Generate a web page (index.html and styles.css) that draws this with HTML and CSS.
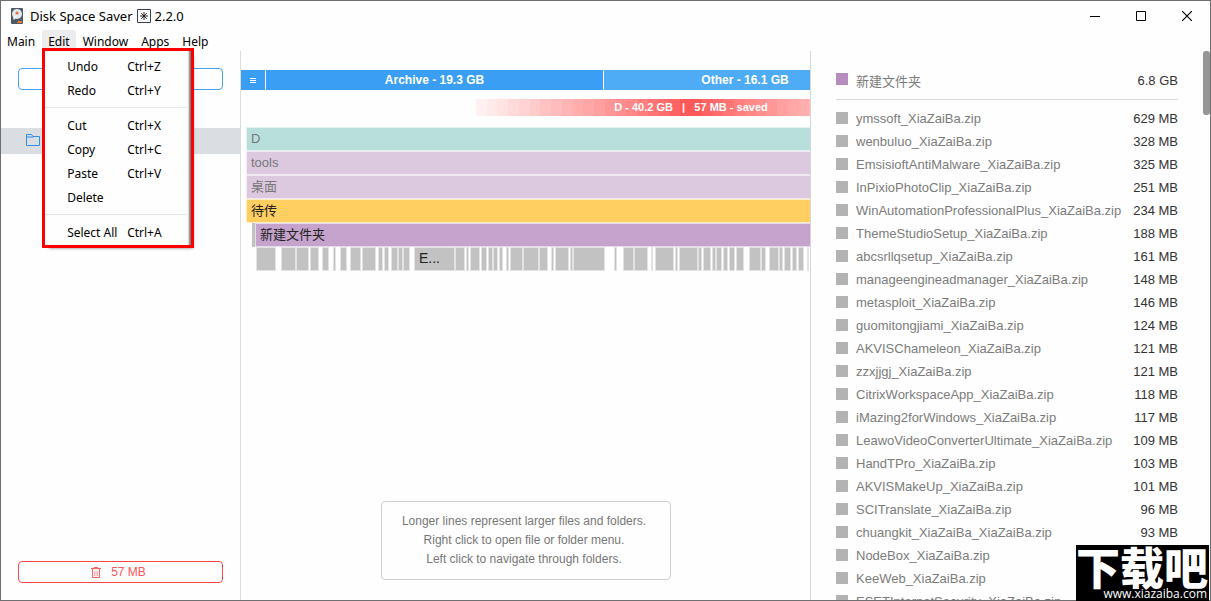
FILE: index.html
```html
<!DOCTYPE html>
<html lang="en">
<head>
<meta charset="utf-8">
<title>Disk Space Saver</title>
<link rel="stylesheet" href="styles.css">
</head>
<body>
<div class="window">
  <header class="titlebar">
    <svg class="app-icon" width="12" height="16" viewBox="0 0 12 16"><rect width="12" height="16" rx="1" fill="#4d5a66"/><circle cx="6" cy="6" r="5" fill="#e4e8ea"/><circle cx="6" cy="5" r="1.6" fill="#d9763c"/><path d="M2 10l3-3 1 1-3 4z" fill="#f8f8f8"/><path d="M7 13h4v2H6z" fill="#ef7b2d"/></svg>
    <h1 class="title">Disk Space Saver <svg class="star" width="14" height="14" viewBox="0 0 14 14"><path d="M.5.5h13v13H.5z" fill="#fff" stroke="#3b3f58"/><path d="M7 3v8M3 7h8M4.2 4.2l5.6 5.6M9.800 4.200l-5.600 5.600" stroke="#222"/></svg> 2.2.0</h1>
    <div class="controls">
      <button aria-label="Minimize"><svg width="10" height="10"><path d="M0 5.500h10" stroke="#000"/></svg></button>
      <button aria-label="Maximize"><svg width="10" height="10"><path d="M.5.5h9v9h-9z" fill="none" stroke="#000"/></svg></button>
      <button aria-label="Close"><svg width="10" height="10"><path d="M0 0l10 10M10 0L0 10" stroke="#000" stroke-width="1.200"/></svg></button>
    </div>
  </header>
  <nav class="menubar">
    <button>Main</button>
    <div class="menu-host">
      <button class="open">Edit</button>
      <div class="menu">
        <button><span>Undo</span><span>Ctrl+Z</span></button>
        <button><span>Redo</span><span>Ctrl+Y</span></button>
        <hr>
        <button><span>Cut</span><span>Ctrl+X</span></button>
        <button><span>Copy</span><span>Ctrl+C</span></button>
        <button><span>Paste</span><span>Ctrl+V</span></button>
        <button><span>Delete</span></button>
        <hr>
        <button><span>Select All</span><span>Ctrl+A</span></button>
      </div>
    </div>
    <button>Window</button>
    <button>Apps</button>
    <button>Help</button>
  </nav>
  <main class="panes">
    <aside class="sidebar">
      <button class="outline scan" aria-label="Scan"></button>
      <div class="folder-row"><svg width="14" height="12" viewBox="0 0 14 12"><path d="M.5 11.500V.5h5l1.500 2h6.500v9zM.5 3h7" fill="none" stroke="#2f8eea"/></svg></div>
      <button class="outline trash"><svg width="10" height="11" viewBox="0 0 10 11" fill="none" stroke="#ff5c5c"><path d="M0 1.500h10M3 .5h4M1.500 2v8.500h7V2"/><path d="M3.500 4v5M5 4v5M6.500 4v5" stroke="#ffb0b0"/></svg>57 MB</button>
    </aside>
    <section class="map">
      <div class="types">
        <button class="type-menu" aria-label="Types"><svg width="6" height="5"><path d="M0 .5h6M0 2.500h6M0 4.500h6" stroke="#fff"/></svg></button>
        <div class="archive">Archive - 19.3 GB</div>
        <div class="other">Other - 16.1 GB</div>
      </div>
      <div class="saved">D - 40.2 GB&nbsp;&nbsp; | &nbsp;&nbsp;57 MB - saved</div>
      <div class="levels">
        <div class="level teal">D</div>
        <div class="level mauve">tools</div>
        <div class="level mauve">桌面</div>
        <div class="level amber">待传</div>
        <div class="nested"><div class="sliver"></div><div class="level purple">新建文件夹</div></div>
      </div>
      <svg class="files" width="554" height="24" fill="#c2c2c2" stroke="#e3e3e3">
        <path d="M.5.5h19v23h-19zM25.500.5h14v23h-14zM40.500.5h12v23h-12zM54.500.5h8v23h-8zM66.500.5h6v23h-6zM77.500.5h2v23h-2zM84.500.5h6v23h-6zM94.500.5h10v23h-10zM106.500.5h13v23h-13zM122.500.5h4v23h-4zM128.500.5h4v23h-4zM135.500.5h6v23h-6zM142.500.5h4v23h-4zM147.500.5h6v23h-6zM158.500.5h40v23h-40zM199.500.5h9v23h-9zM210.500.5h2v23h-2zM214.500.5h9v23h-9zM225.500.5h5v23h-5zM232.500.5h4v23h-4zM237.500.5h4v23h-4zM243.500.5h3v23h-3zM250.500.5h2v23h-2zM254.500.5h12v23h-12zM267.500.5h15v23h-15zM283.500.5h8v23h-8zM295.500.5h2v23h-2zM299.500.5h13v23h-13zM314.500.5h2v23h-2zM317.500.5h31v23h-31z"/>
        <path d="M358.500.5h2v23h-2zM367.500.5h10v23h-10zM378.500.5h13v23h-13zM395.500.5h1v23h-1zM399.500.5h18v23h-18zM419.500.5h2v23h-2zM423.500.5h18v23h-18zM442.500.5h3v23h-3zM447.500.5h7v23h-7zM456.500.5h3v23h-3zM460.500.5h5v23h-5zM467.500.5h4v23h-4zM473.500.5h5v23h-5zM480.500.5h7v23h-7zM493.500.5h11v23h-11zM505.500.5h4v23h-4zM513.500.5h9v23h-9zM523.500.5h3v23h-3zM528.500.5h6v23h-6zM536.500.5h4v23h-4zM542.500.5h5v23h-5zM551.500.5h1v23h-1z"/>
        <text x="163" y="16">E...</text>
      </svg>
      <div class="hint">Longer lines represent larger files and folders.<br>Right click to open file or folder menu.<br>Left click to navigate through folders.</div>
    </section>
    <section class="details">
      <div class="row head"><i></i><span>新建文件夹</span><b>6.8 GB</b></div>
      <div class="row"><i></i><span>ymssoft_XiaZaiBa.zip</span><b>629 MB</b></div>
      <div class="row"><i></i><span>wenbuluo_XiaZaiBa.zip</span><b>328 MB</b></div>
      <div class="row"><i></i><span>EmsisioftAntiMalware_XiaZaiBa.zip</span><b>325 MB</b></div>
      <div class="row"><i></i><span>InPixioPhotoClip_XiaZaiBa.zip</span><b>251 MB</b></div>
      <div class="row"><i></i><span>WinAutomationProfessionalPlus_XiaZaiBa.zip</span><b>234 MB</b></div>
      <div class="row"><i></i><span>ThemeStudioSetup_XiaZaiBa.zip</span><b>188 MB</b></div>
      <div class="row"><i></i><span>abcsrllqsetup_XiaZaiBa.zip</span><b>161 MB</b></div>
      <div class="row"><i></i><span>manageengineadmanager_XiaZaiBa.zip</span><b>148 MB</b></div>
      <div class="row"><i></i><span>metasploit_XiaZaiBa.zip</span><b>146 MB</b></div>
      <div class="row"><i></i><span>guomitongjiami_XiaZaiBa.zip</span><b>124 MB</b></div>
      <div class="row"><i></i><span>AKVISChameleon_XiaZaiBa.zip</span><b>121 MB</b></div>
      <div class="row"><i></i><span>zzxjjgj_XiaZaiBa.zip</span><b>121 MB</b></div>
      <div class="row"><i></i><span>CitrixWorkspaceApp_XiaZaiBa.zip</span><b>118 MB</b></div>
      <div class="row"><i></i><span>iMazing2forWindows_XiaZaiBa.zip</span><b>117 MB</b></div>
      <div class="row"><i></i><span>LeawoVideoConverterUltimate_XiaZaiBa.zip</span><b>109 MB</b></div>
      <div class="row"><i></i><span>HandTPro_XiaZaiBa.zip</span><b>103 MB</b></div>
      <div class="row"><i></i><span>AKVISMakeUp_XiaZaiBa.zip</span><b>101 MB</b></div>
      <div class="row"><i></i><span>SCITranslate_XiaZaiBa.zip</span><b>96 MB</b></div>
      <div class="row"><i></i><span>chuangkit_XiaZaiBa_XiaZaiBa.zip</span><b>93 MB</b></div>
      <div class="row"><i></i><span>NodeBox_XiaZaiBa.zip</span></div>
      <div class="row"><i></i><span>KeeWeb_XiaZaiBa.zip</span></div>
      <div class="row"><i></i><span>ESETInternetSecurity_XiaZaiBa.zip</span></div>
      <div class="thumb"></div>
    </section>
  </main>
</div>
<div class="watermark"><strong>下载吧</strong><span>www.xiazaiba.com</span></div>
</body>
</html>
```
FILE: styles.css
```css
* { box-sizing: border-box; }
body { margin: 0; font-family: "Liberation Sans", "Noto Sans CJK SC", sans-serif; color: #333; }
button { margin: 0; padding: 0; border: 0; background: none; font: inherit; color: inherit; }
svg { display: block; }
.window { height: 100vh; display: flex; flex-direction: column; overflow: hidden; border: 1px solid #6f6f71; background: #fefefe; }
.titlebar, .menubar { font-family: "Noto Sans", sans-serif; color: #000; flex: none; display: flex; }
.titlebar { height: 29px; align-items: center; padding-left: 10px; }
.title { display: flex; align-items: center; gap: 4px; margin: 0 auto 0 7px; font-size: 13px; font-weight: 400; }
.controls { display: flex; }
.controls button { width: 46px; height: 28px; display: grid; place-items: center; }
.menubar { height: 21px; gap: 1px; font-size: 12px; }
.menubar > button, .menu-host > button { height: 21px; padding: 0 6px; line-height: 23px; }
.menu-host { position: relative; }
.menu-host > .open { background: #ececec; border-radius: 3px 3px 0 0; }
.menu { position: absolute; z-index: 2; top: 18px; left: 0; width: 152px; padding-top: 3px; padding-bottom: 1px; border: 3px solid #f00; background: #fefefe; box-shadow: inset -3px 0 2px -1px #777, 3px 4px 3px -4px #777; }
.menu button { width: 100%; height: 24px; padding-left: 22px; display: grid; grid-template-columns: 60px 1fr; align-items: center; text-align: left; white-space: nowrap; }
.menu hr { height: 1px; margin: 5px 4px 5px 0; border: 0; background: #e6e6e6; }
.panes { flex: 1; min-height: 0; display: flex; }
.sidebar { width: 240px; flex: none; display: flex; flex-direction: column; padding: 17px 0; border-right: 1px solid #dcdcdc; }
.outline { height: 22px; margin: 0 17px; border: 1px solid #45a2f2; border-radius: 4px; }
.folder-row { height: 26px; margin-top: 38px; padding: 6px 25px; background: #dadde1; }
.trash { margin-top: auto; padding-right: 4px; border-color: #ff4646; color: #f55; font-size: 12px; display: flex; justify-content: center; align-items: center; gap: 10px; }
.map { flex: 1; min-width: 0; overflow: hidden; display: flex; flex-direction: column; padding: 19px 0 20px; border-right: 1px solid #d6d6d6; }
.types { display: flex; flex: none; gap: 1px; height: 20px; line-height: 20px; font-size: 12px; font-weight: 700; color: #fff; text-align: center; }
.type-menu { width: 24px; flex: none; display: grid; place-items: center; background: #3a9ff4; }
.archive { width: 337px; flex: none; background: #3a9ff4; }
.other { width: 282px; flex: none; background: #4eabf6; }
.saved {
  --steps: #fff1f1 0 5%, #ffeaea 0 10%, #ffe2e2 0 15%, #ffdada 0 20%, #ffd3d3 0 25%, #ffcbcb 0 30%, #ffc3c3 0 35%, #ffbcbc 0 40%, #ffb5b5 0 45%, #ffadad 0 50%, #ffa6a6 0 55%, #ff9f9f 0 60%, #ff9797 0 65%, #ff8f8f 0 70%, #ff8787 0 75%, #ff7e7e 0 80%, #ff7575 0 85%, #ff6c6c 0 90%, #ff6363 0 95%, #ff5858 0 100%;
  flex: none; width: 430px; height: 17px; margin: 9px 0 11px 235px; line-height: 17px; font-size: 11px; font-weight: 700; color: #fff; text-align: center; white-space: nowrap;
  background: linear-gradient(to right, var(--steps)) left / 50% 100% no-repeat, linear-gradient(to left, var(--steps)) right / 50% 100% no-repeat;
}
.levels { flex: none; padding-left: 5px; font-size: 13px; }
.level { height: 24px; padding-left: 5px; line-height: 24px; box-shadow: inset 1px 1px #ffffff99, inset 0 -1px #ffffff99; }
.teal { background: #b9dfdd; color: #777; }
.mauve { background: #dcc8df; color: #777; }
.amber { background: #ffcf62; color: #222; }
.nested { display: flex; padding-left: 6px; }
.nested .level { flex: 1; }
.sliver { width: 3px; background: #c2c2c2; }
.purple { background: #c5a3cc; color: #222; }
.files { flex: none; margin-left: 15px; }
.files text { font-size: 14px; fill: #222; stroke: none; }
.hint { width: 290px; margin: auto auto 0 140px; padding: 10px 4px 10px 0; border: 1px solid #cfcfcf; border-radius: 4px; font-size: 12px; line-height: 19px; text-align: center; color: #777; }
.details { position: relative; width: 399px; flex: none; padding: 11px 32px 0 25px; overflow: hidden; font-size: 13px; }
.row { display: flex; height: 23px; align-items: center; gap: 8px; color: #7c7c7c; white-space: nowrap; }
.row i { width: 12px; height: 12px; flex: none; margin-bottom: 2px; background: #b3b3b3; }
.row b { margin-left: auto; font-weight: 400; color: #333; }
.head { height: 38px; margin-bottom: 7px; padding-bottom: 1px; border-bottom: 1px solid #d9d9d9; }
.head i { background: #b68dbf; }
.thumb { position: absolute; top: 0; right: 0; width: 7px; height: 64px; border-radius: 3px; background: #969696; }
.watermark { position: fixed; right: 2px; bottom: 0; z-index: 3; width: 133px; height: 56px; overflow: hidden; display: flex; flex-direction: column; background: #000; color: #fff; font-family: "Open Sans", "Noto Sans CJK SC", sans-serif; }
.watermark strong { font: 900 44px/42px "Noto Sans CJK SC", sans-serif; }
.watermark span { padding-right: 2px; font-size: 12px; line-height: 14px; text-align: right; }
```
